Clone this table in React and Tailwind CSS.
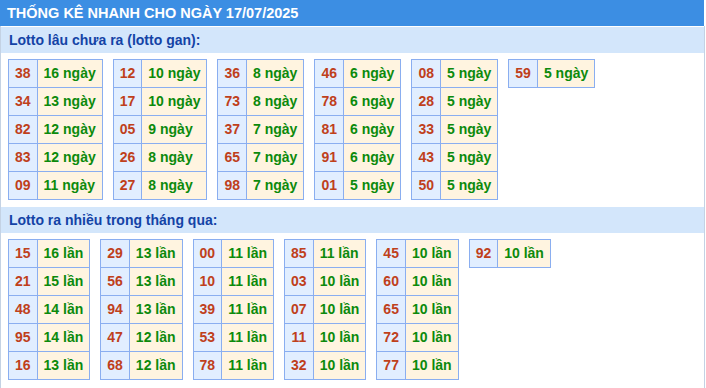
import React from "react";

// Quick stats: lotto gan (not drawn for a long time) and lotto drawn often
const ganTables = [
  [["38", "16"], ["34", "13"], ["82", "12"], ["83", "12"], ["09", "11"]],
  [["12", "10"], ["17", "10"], ["05", "9"], ["26", "8"], ["27", "8"]],
  [["36", "8"], ["73", "8"], ["37", "7"], ["65", "7"], ["98", "7"]],
  [["46", "6"], ["78", "6"], ["81", "6"], ["91", "6"], ["01", "5"]],
  [["08", "5"], ["28", "5"], ["33", "5"], ["43", "5"], ["50", "5"]],
  [["59", "5"]],
];

const hotTables = [
  [["15", "16"], ["21", "15"], ["48", "14"], ["95", "14"], ["16", "13"]],
  [["29", "13"], ["56", "13"], ["94", "13"], ["47", "12"], ["68", "12"]],
  [["00", "11"], ["10", "11"], ["39", "11"], ["53", "11"], ["78", "11"]],
  [["85", "11"], ["03", "10"], ["07", "10"], ["11", "10"], ["32", "10"]],
  [["45", "10"], ["60", "10"], ["65", "10"], ["72", "10"], ["77", "10"]],
  [["92", "10"]],
];

const StatTable = ({ rows, unit }) => (
  <div className="grid grid-cols-[auto_auto] self-start border-l border-t border-[#8aaef0]">
    {rows.map(([num, count]) => (
      <React.Fragment key={num}>
        <div className="h-[28px] border-r border-b border-[#8aaef0] bg-[#e1eeff] px-[6px] text-center leading-[27px] text-[#bf401b]">
          {num}
        </div>
        <div className="h-[28px] border-r border-b border-[#8aaef0] bg-[#fff4e0] px-[6px] leading-[27px] text-[#0c8a0c]">
          {count} {unit}
        </div>
      </React.Fragment>
    ))}
  </div>
);

const SectionTitle = ({ children }) => (
  <div className="h-[26px] bg-[#d3e6fb] pl-[8px] text-[14px] leading-[26px] text-[#1343a6]">
    {children}
  </div>
);

export default function App() {
  return (
    <div className="w-[706px] h-[388px] overflow-hidden bg-white font-['Liberation_Sans',Arial,sans-serif] font-bold text-[14px]">
      {/* Header */}
      <div className="h-[26px] w-[704px] bg-[#3c8ee3] pl-[7px] text-[14.5px] leading-[27px] text-white">
        THỐNG KÊ NHANH CHO NGÀY 17/07/2025
      </div>

      <div className="w-[705px] border-x border-[#c4d2e4] pt-px">
        <SectionTitle>Lotto lâu chưa ra (lotto gan):</SectionTitle>
        <div className="flex gap-[10px] px-[7px] pt-[6px] pb-[7px]">
          {ganTables.map((rows, i) => (
            <StatTable key={i} rows={rows} unit="ngày" />
          ))}
        </div>

        <SectionTitle>Lotto ra nhiều trong tháng qua:</SectionTitle>
        <div className="flex gap-[10px] px-[7px] pt-[6px] pb-[10px]">
          {hotTables.map((rows, i) => (
            <StatTable key={i} rows={rows} unit="lần" />
          ))}
        </div>
      </div>
    </div>
  );
}
